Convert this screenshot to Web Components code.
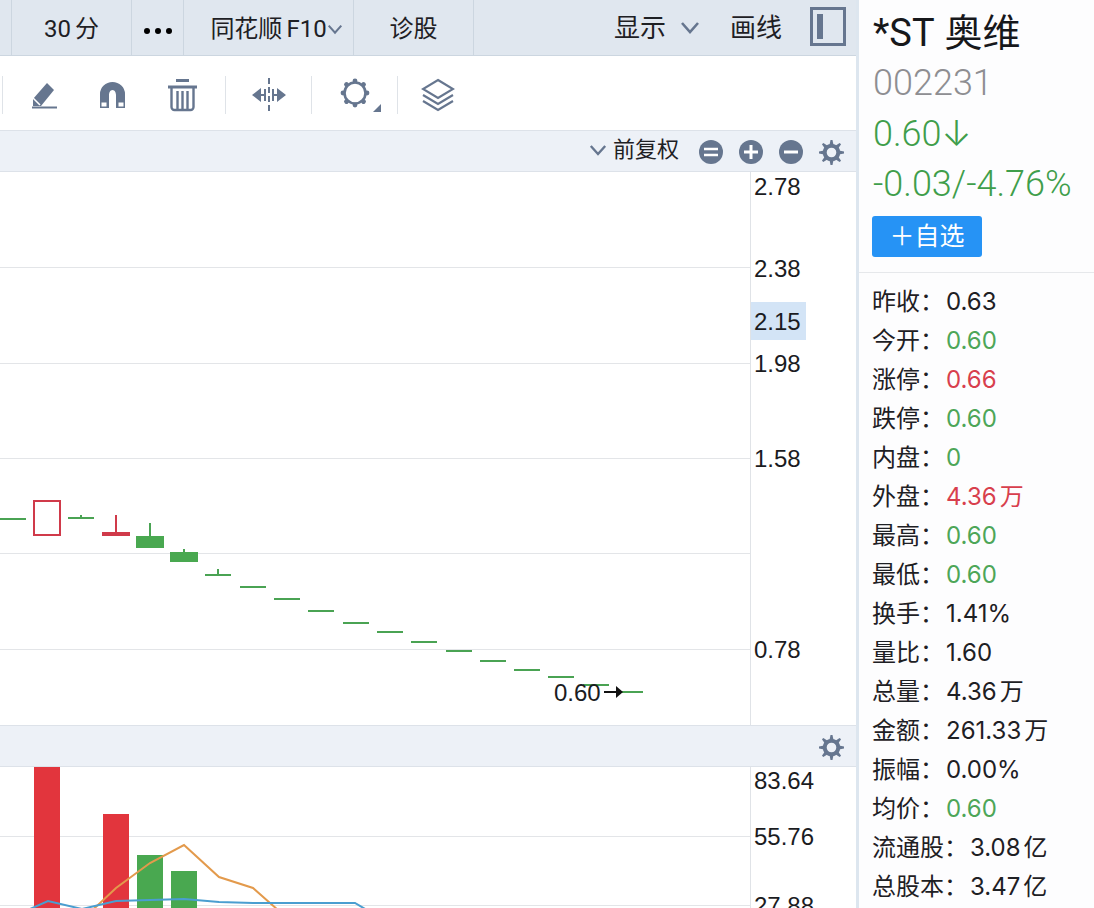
<!DOCTYPE html>
<html lang="zh-CN">
<head>
<meta charset="utf-8">
<meta name="viewport" content="width=device-width, initial-scale=1">
<title>*ST奥维 002231</title>
<style>
  html, body { margin: 0; height: 100%; }
  body {
    --ink: #1e2024;
    --icon: #66768f;
    --up: #d83f4d;
    --down: #4da658;
    --bar: #e0e7ef;
    --strip: #edf1f7;
    --line: #ccd6e0;
    --latin: Roboto, "Noto Sans CJK SC", sans-serif;
    --numeric: Inter, "Noto Sans CJK SC", sans-serif;
    font: 24px/32px var(--latin);
    color: var(--ink);
    background: #fff;
  }
</style>
</head>
<body>
<stock-app></stock-app>

<script>
const SHAPES = {
  pencil: '<path d="M3 19 17 3l7 7-13 16H3z" fill="currentColor"/><path d="m2 17 8 8" stroke="#fff" stroke-width="1.600"/><path d="M2 27.500h25" stroke="currentColor" stroke-width="2"/>',
  magnet: '<path d="M2 28V14a12.500 12 0 0 1 25 0v14h-9V15c0-2-1-5-3.500-5S11 13 11 15v13z" fill="currentColor"/><path d="M3.500 22.500h5v4h-5zM20.500 22.500h5v4h-5z" fill="#fff"/>',
  trash: '<path d="M9 1.500h13M1 8h29" stroke="currentColor" stroke-width="3"/><path d="M4.500 8v20a3 3 0 0 0 3 3h16a3 3 0 0 0 3-3V8M10.500 12v19M15.500 12v19M20.500 12v19" stroke="currentColor" stroke-width="2.400" fill="none"/>',
  split: '<path d="M17 0v34" stroke="currentColor" stroke-width="2" stroke-dasharray="6 3"/><path d="M0 17 9 10v14zM34 17l-9-7v14z" fill="currentColor"/><path d="M8 17h5M21 17h5M13 11v12M21 11v12" stroke="currentColor" stroke-width="2"/>',
  layers: '<path d="m17 2 15 9-15 9L2 11z M2 17l15 9 15-9M2 23l15 9 15-9" stroke="currentColor" stroke-width="2.200" fill="none"/>',
  chevron: '<path d="m2 2 8 9 8-9" stroke="currentColor" stroke-width="2.600" fill="none"/>',
  panel: '<rect x="1.500" y="1.500" width="33" height="36" stroke="currentColor" stroke-width="3" fill="none"/><path d="M7 7h6v25H7z" fill="currentColor"/>',
  equal: '<circle cx="12" cy="12" r="12" fill="currentColor"/><path d="M5 9h14M5 15h14" stroke="#fff" stroke-width="2.400"/>',
  plus: '<circle cx="12" cy="12" r="12" fill="currentColor"/><path d="M5 12h14M12 5v14" stroke="#fff" stroke-width="3"/>',
  minus: '<circle cx="12" cy="12" r="12" fill="currentColor"/><path d="M5 12h14" stroke="#fff" stroke-width="3"/>',
  gear: [0,45,90,135,180,225,270,315].map(a => `<path d="M10.500 5 11.500 0h2l1 5z" transform="rotate(${a} 12.500 12.500)" fill="currentColor"/>`).join('') +
    '<circle cx="12.500" cy="12.500" r="6.800" stroke="currentColor" stroke-width="4" fill="none"/>',
  cog: [0,45,90,135,180,225,270,315].map(a => `<circle cx="15" cy="3" r="2.400" transform="rotate(${a} 15 15)" fill="currentColor"/>`).join('') +
    '<circle cx="15" cy="15" r="10.500" stroke="currentColor" stroke-width="2.600" fill="none"/>',
  corner: '<path d="M8 0v8H0z" fill="currentColor"/>',
  dots: '<circle cx="3" cy="3" r="3"/><circle cx="14" cy="3" r="3"/><circle cx="25" cy="3" r="3"/>'
};
const BOX = {
  pencil: [28, 30], magnet: [29, 30], trash: [31, 33], split: [34, 34], layers: [34, 34],
  chevron: [20, 14], panel: [36, 39], equal: [24, 24], plus: [24, 24], minus: [24, 24],
  gear: [25, 25], cog: [30, 30], corner: [8, 8], dots: [28, 6]
};

class UiIcon extends HTMLElement {
  connectedCallback() {
    if (this.shadowRoot) return;
    const name = this.getAttribute('name');
    const [w, h] = BOX[name];
    const size = this.getAttribute('width') || w;
    this.attachShadow({ mode: 'open' }).innerHTML = `
      <style>:host { display: inline-flex; flex: none; } svg { display: block; }</style>
      <svg width="${size}" height="${Math.round(size * h / w)}" viewBox="0 0 ${w} ${h}" aria-hidden="true">${SHAPES[name]}</svg>`;
  }
}
customElements.define('ui-icon', UiIcon);

class IconButton extends HTMLElement {
  connectedCallback() {
    if (this.shadowRoot) return;
    this.attachShadow({ mode: 'open' }).innerHTML = `
      <style>
        :host { display: inline-flex; flex: none; color: var(--icon); }
        button { all: unset; display: flex; align-items: center; justify-content: center; width: 100%; cursor: pointer; }
      </style>
      <button type="button" aria-label="${this.getAttribute('label')}"><slot></slot></button>`;
  }
}
customElements.define('icon-button', IconButton);

class TextButton extends HTMLElement {
  connectedCallback() {
    if (this.shadowRoot) return;
    this.attachShadow({ mode: 'open' }).innerHTML = `
      <style>
        :host { display: flex; flex: none; white-space: nowrap; }
        button { all: unset; display: flex; flex: 1; align-items: center; justify-content: center; gap: var(--gap, 0px); cursor: pointer; }
      </style>
      <button type="button"><slot></slot></button>`;
  }
}
customElements.define('text-button', TextButton);

class TopBar extends HTMLElement {
  connectedCallback() {
    this.attachShadow({ mode: 'open' }).innerHTML = `
      <style>
        :host { display: flex; height: 55px; background: var(--bar); border-bottom: 1px solid var(--line); }
        nav { display: flex; flex: 1; padding-left: 11px; }
        nav > * { box-sizing: border-box; border-left: 1px solid var(--line); padding-top: 3px; }
        nav > :last-child { border-right: 1px solid var(--line); }
        .period, .diagnose { width: 120px; }
        .diagnose { width: 121px; }
        .more { width: 52px; color: #17191c; padding-top: 6px; }
        .f10 { width: 170px; padding-left: 16px; }
        .f10 ui-icon { color: var(--icon); }
        .latin { margin: 0 4px 0 0; }
        .f10 .latin { margin: 0 0 0 4px; }
        .tools { display: flex; align-items: center; padding-right: 10px; }
        .show { --gap: 14px; margin-right: 30px; }
        .show ui-icon { color: var(--icon); }
        .draw { margin-right: 28px; }
        .tools > text-button { font-size: 26px; }
        .tools > icon-button { padding-bottom: 3px; }
      </style>
      <nav>
        <text-button class="period"><span class="latin">30</span>分</text-button>
        <icon-button class="more" label="更多周期"><ui-icon name="dots"></ui-icon></icon-button>
        <text-button class="f10">同花顺<span class="latin">F10</span><ui-icon name="chevron" width="16"></ui-icon></text-button>
        <text-button class="diagnose">诊股</text-button>
      </nav>
      <div class="tools">
        <text-button class="show">显示<ui-icon name="chevron"></ui-icon></text-button>
        <text-button class="draw">画线</text-button>
        <icon-button label="侧栏"><ui-icon name="panel"></ui-icon></icon-button>
      </div>`;
  }
}
customElements.define('top-bar', TopBar);

class DrawTools extends HTMLElement {
  connectedCallback() {
    this.attachShadow({ mode: 'open' }).innerHTML = `
      <style>
        :host { display: flex; align-items: center; height: 74px; padding: 4px 0 0 2px; box-sizing: border-box; }
        hr { width: 1px; height: 38px; margin: 0; border: 0; background: #dfe3e8; }
        .group { display: flex; align-items: center; justify-content: space-between; box-sizing: border-box; }
        .lines { width: 222px; padding: 0 27px; }
        .range { width: 85px; justify-content: center; }
        .stack { width: 80px; justify-content: center; }
        .settings { width: 85px; padding: 0 16px 0 28px; }
        ui-icon[name=cog] { padding-bottom: 4px; }
        ui-icon[name=corner] { align-self: flex-end; padding-left: 3px; }
      </style>
      <hr>
      <div class="group lines">
        <icon-button label="画笔"><ui-icon name="pencil"></ui-icon></icon-button>
        <icon-button label="磁吸"><ui-icon name="magnet"></ui-icon></icon-button>
        <icon-button label="删除"><ui-icon name="trash"></ui-icon></icon-button>
      </div>
      <hr>
      <div class="group range"><icon-button label="区间"><ui-icon name="split"></ui-icon></icon-button></div>
      <hr>
      <div class="group settings"><icon-button label="设置"><ui-icon name="cog"></ui-icon><ui-icon name="corner"></ui-icon></icon-button></div>
      <hr>
      <div class="group stack"><icon-button label="图层"><ui-icon name="layers"></ui-icon></icon-button></div>`;
  }
}
customElements.define('draw-tools', DrawTools);

class PanelStrip extends HTMLElement {
  connectedCallback() {
    this.attachShadow({ mode: 'open' }).innerHTML = `
      <style>
        :host {
          display: flex; align-items: center; justify-content: flex-end; gap: 16px;
          box-sizing: border-box; height: 42px; padding: 2px 12px 0 0;
          background: var(--strip); border: solid #dde2e9; border-width: 1px 0;
        }
      </style>
      <slot></slot>`;
  }
}
customElements.define('panel-strip', PanelStrip);

/* Shared drawing base: a plot that fills the width, and a value axis on its right. */
class ChartBase extends HTMLElement {
  render(plot, axis, gridLines) {
    const grid = gridLines.map(y => `<path d="M0 ${y}.500H4000" stroke="#e3e5e8"/>`).join('');
    this.attachShadow({ mode: 'open' }).innerHTML = `
      <style>
        :host { display: flex; min-height: 0; overflow: hidden; }
        svg { display: block; height: 100%; }
        .plot { flex: 1; min-width: 0; }
        .axis { flex: none; width: 105px; border-left: 1px solid #e0e3e7; }
        text { font: 24px "Liberation Sans", Arial, sans-serif; fill: #1b1c1f; }
      </style>
      <svg class="plot" role="img" aria-label="${this.getAttribute('label')}">${grid}${plot}</svg>
      <svg class="axis">${axis}</svg>`;
  }
}

class PriceChart extends ChartBase {
  connectedCallback() {
    const G = '#4aa353', R = '#d03a4a';
    const flat = [[0,347],[68,346],[205,403],[240,415],[274,427],[308,439],[343,451],[377,460],[411,470],[446,479],[480,489],[514,498],[548,505],[583,513],[617,520]];
    const dashes = flat.map(([x, y]) => `<path d="M${x} ${y}h26" stroke="${G}" stroke-width="2"/>`).join('');
    const plot = `${dashes}
      <path d="M81 343v4M150 351v14M184 377v4M218 397v6" stroke="${G}" stroke-width="2"/>
      <rect x="34" y="329" width="26" height="34" fill="#fff" stroke="${R}" stroke-width="2"/>
      <path d="M102 360h28v4h-28z" fill="${R}"/><path d="M116 343v17" stroke="${R}" stroke-width="2"/>
      <path d="M136 364h28v12h-28zM170 380h28v10h-28z" fill="#49a850"/>
      <text x="554" y="529">0.60</text>
      <path d="M604 520h14" stroke="#111" stroke-width="2"/><path d="m616 514 7 6-7 6z" fill="#111"/>`;
    const ticks = [['2.78',23],['2.38',105],['1.98',200],['1.58',295],['0.78',486]];
    const axis = `<path d="M0 130h55v38H0z" fill="#d3e4f6"/><text x="3" y="158">2.15</text>` +
      ticks.map(([t, y]) => `<text x="3" y="${y}">${t}</text>`).join('');
    this.render(plot, axis, [95, 191, 286, 381, 477]);
  }
}
customElements.define('price-chart', PriceChart);

class VolumeChart extends ChartBase {
  connectedCallback() {
    const plot = `
      <path d="M34 0h26v300H34zM103 47h26v300h-26z" fill="#e2353d"/>
      <path d="M137 88h26v300h-26zM171 104h26v300h-26z" fill="#49a850"/>
      <path d="M82 153 116 121 150 96 184 78 219 110 253 121 287 151" stroke="#e39a4c" stroke-width="2" fill="none"/>
      <path d="M30 142 48 134 82 142 116 134 184 132 219 135 253 136H355L372 146" stroke="#4a9ed0" stroke-width="2" fill="none"/>`;
    const axis = [['83.64',22],['55.76',78],['27.88',147]].map(([t, y]) => `<text x="3" y="${y}">${t}</text>`).join('');
    this.render(plot, axis, [69, 138]);
  }
}
customElements.define('volume-chart', VolumeChart);

class QuotePanel extends HTMLElement {
  connectedCallback() {
    const rows = [
      ['昨收', '0.63'], ['今开', '0.60', 'down'], ['涨停', '0.66', 'up'], ['跌停', '0.60', 'down'],
      ['内盘', '0', 'down'], ['外盘', '4.36万', 'up'], ['最高', '0.60', 'down'], ['最低', '0.60', 'down'],
      ['换手', '1.41%'], ['量比', '1.60'], ['总量', '4.36万'], ['金额', '261.33万'],
      ['振幅', '0.00%'], ['均价', '0.60', 'down'], ['流通股', '3.08亿'], ['总股本', '3.47亿']
    ];
    const list = rows.map(([k, v, tone = '']) =>
      `<div><dt>${k}：</dt><dd class="${tone}">${v.replace(/[万亿]/, '<span>$&</span>')}</dd></div>`).join('');
    this.attachShadow({ mode: 'open' }).innerHTML = `
      <style>
        :host { display: block; background: #fdfdfe; font-family: var(--numeric); white-space: nowrap; }
        header { height: 273px; box-sizing: border-box; padding: 8px 0 0 14px; border-bottom: 1px solid #e6e8eb; font: 300 36px/50px var(--latin); }
        h1 { margin: 0; font: inherit; font-weight: 400; font-size: 38px; color: #17181b; }
        h1 span { margin-left: 10px; }
        p { margin: 0; }
        .code { color: #8e8e92; }
        .up { color: var(--up); }
        .down { color: var(--down); }
        header .down { color: #3f9e4b; }
        .arrow { font-family: Inter, sans-serif; }
        button {
          display: block; width: 110px; height: 41px; margin: 7px 0 0 -1px; padding: 0; border: 0; border-radius: 3px;
          background: #2693f5; color: #fff; font: 25px/41px var(--latin); cursor: pointer;
        }
        dl { margin: 0; padding: 9px 0 0 13px; line-height: 39px; }
        div { display: flex; gap: 2px; }
        dt, dd { margin: 0; }
        dd span { margin-left: 3px; }
      </style>
      <header>
        <h1>*ST<span>奥维</span></h1>
        <p class="code">002231</p>
        <p class="down">0.60<span class="arrow">↓</span></p>
        <p class="down">-0.03/-4.76%</p>
        <button type="button">＋自选</button>
      </header>
      <dl>${list}</dl>`;
  }
}
customElements.define('quote-panel', QuotePanel);

class StockApp extends HTMLElement {
  connectedCallback() {
    this.attachShadow({ mode: 'open' }).innerHTML = `
      <style>
        :host { display: grid; grid-template-columns: minmax(0, 1fr) 235px; height: 100vh; overflow: hidden; }
        main { display: flex; flex-direction: column; min-height: 0; border-right: 3px solid #dde6ef; }
        top-bar, draw-tools, panel-strip { flex: none; }
        price-chart { flex: none; height: 553px; }
        volume-chart { flex: 1; }
        .adjust { --gap: 6px; margin-right: 4px; padding-bottom: 4px; font-size: 22px; }
        .adjust ui-icon { color: var(--icon); }
      </style>
      <main>
        <top-bar></top-bar>
        <draw-tools></draw-tools>
        <panel-strip>
          <text-button class="adjust"><ui-icon name="chevron" width="18"></ui-icon>前复权</text-button>
          <icon-button label="重置"><ui-icon name="equal"></ui-icon></icon-button>
          <icon-button label="放大"><ui-icon name="plus"></ui-icon></icon-button>
          <icon-button label="缩小"><ui-icon name="minus"></ui-icon></icon-button>
          <icon-button label="图表设置"><ui-icon name="gear"></ui-icon></icon-button>
        </panel-strip>
        <price-chart label="K线图"></price-chart>
        <panel-strip>
          <icon-button label="指标设置"><ui-icon name="gear"></ui-icon></icon-button>
        </panel-strip>
        <volume-chart label="成交量"></volume-chart>
      </main>
      <quote-panel></quote-panel>`;
  }
}
customElements.define('stock-app', StockApp);
</script>
</body>
</html>
